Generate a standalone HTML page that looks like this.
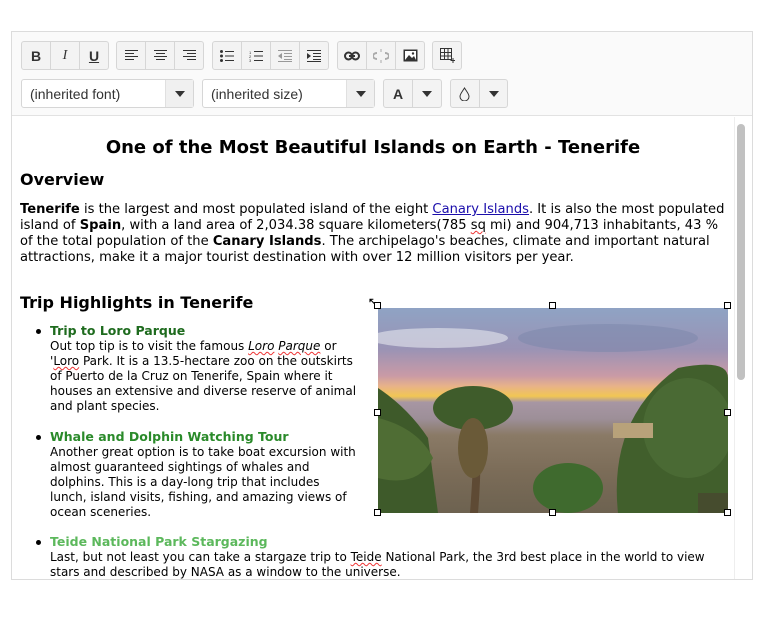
<!DOCTYPE html>
<html><head><meta charset="utf-8"><style>
*{box-sizing:border-box;margin:0;padding:0}
body{width:764px;height:643px;background:#fff;position:relative;font-family:"DejaVu Sans",Verdana,sans-serif;color:#000;overflow:hidden}
.ab{position:absolute;white-space:nowrap}
#ed{position:absolute;left:11px;top:31px;width:742px;height:549px;border:1px solid #dcdcdc}
#tb{position:absolute;left:12px;top:32px;width:740px;height:84px;background:#fafafa;border-bottom:1px solid #e2e2e2}
.g{position:absolute;top:41px;height:29px;border:1px solid #d6d6d6;border-radius:3px;background:#f3f3f3;display:flex}
.g>div{flex:1;border-right:1px solid #d6d6d6;display:flex;align-items:center;justify-content:center;font-family:"Liberation Sans",sans-serif;font-size:14px;color:#333;position:relative}
.g>div:last-child{border-right:none}
.sel{position:absolute;top:79px;height:29px;border:1px solid #d6d6d6;border-radius:3px;background:#fff;font-family:"Liberation Sans",sans-serif;font-size:14px;color:#333;padding:6px 8px}
.sel .dd{position:absolute;right:0;top:0;width:28px;height:27px;background:#f0f0f0;border-left:1px solid #e0e0e0}
.tri{display:block;width:0;height:0;border-left:5px solid transparent;border-right:5px solid transparent;border-top:6px solid #333;position:absolute}
.l{font-size:12px;position:absolute;white-space:nowrap;left:50px}
.h{font-weight:bold;font-size:12.5px}
.sq{position:absolute;width:7px;height:7px;border:1px solid #000;background:#fff}
.sp{text-decoration:underline wavy #e33;text-decoration-thickness:1px}
.bu{position:absolute;left:36px;width:5px;height:5px;border-radius:50%;background:#000}
</style></head><body>
<div id="ed"></div>
<div id="tb"></div>
<!-- row1 -->
<div class="g" style="left:21px;width:88px"><div style="font-weight:bold">B</div><div style="font-style:italic;font-family:'Liberation Serif',serif">I</div><div style="text-decoration:underline;font-weight:bold">U</div></div>
<div class="g" style="left:116px;width:88px"><div><svg width="13" height="11"><path d="M0 .5h13M0 3.5h9M0 6.5h13M0 9.5h9" stroke="#333"/></svg></div><div><svg width="13" height="11"><path d="M0 .5h13M2 3.5h9M0 6.5h13M2 9.5h9" stroke="#333"/></svg></div><div><svg width="13" height="11"><path d="M0 .5h13M4 3.5h9M0 6.5h13M4 9.5h9" stroke="#333"/></svg></div></div>
<div class="g" style="left:212px;width:117px"><div><svg width="14" height="12"><circle cx="1.5" cy="1.5" r="1.5" fill="#333"/><circle cx="1.5" cy="6" r="1.5" fill="#333"/><circle cx="1.5" cy="10.5" r="1.5" fill="#333"/><path d="M5 1.5h9M5 6h9M5 10.5h9" stroke="#333"/></svg></div><div><svg width="14" height="12"><text x="0" y="4" font-size="4" fill="#333">1</text><text x="0" y="8" font-size="4" fill="#333">2</text><text x="0" y="12" font-size="4" fill="#333">3</text><path d="M5 1.5h9M5 6h9M5 10.5h9" stroke="#333"/></svg></div><div><svg width="14" height="12"><path d="M0 .5h14M6 3.5h8M6 6.5h8M6 9.5h8M0 11.5h14" stroke="#999"/><path d="M4 3v6L0 6z" fill="#999"/></svg></div><div><svg width="14" height="12"><path d="M0 .5h14M6 3.5h8M6 6.5h8M6 9.5h8M0 11.5h14" stroke="#333"/><path d="M0 3v6l4-3z" fill="#333"/></svg></div></div>
<div class="g" style="left:337px;width:88px"><div><svg width="16" height="10"><rect x="1" y="1.5" width="7" height="7" rx="3.5" fill="none" stroke="#333" stroke-width="2"/><rect x="8" y="1.5" width="7" height="7" rx="3.5" fill="none" stroke="#333" stroke-width="2"/><path d="M5 5h6" stroke="#333" stroke-width="2"/></svg></div><div><svg width="16" height="14"><path d="M4 4a4 3 0 0 0 0 6M12 4a4 3 0 0 1 0 6" fill="none" stroke="#aaa" stroke-width="2"/><path d="M8 0v3M8 11v3" stroke="#aaa"/></svg></div><div><svg width="15" height="13"><rect x=".5" y=".5" width="14" height="12" fill="#333"/><rect x="2" y="2" width="11" height="9" fill="#fff"/><path d="M2 11l4-5 3 3 2-2 2 4z" fill="#333"/><circle cx="10" cy="4.5" r="1.2" fill="#333"/></svg></div></div>
<div class="g" style="left:432px;width:30px"><div><svg width="15" height="15"><path d="M.5.5h11v11h-11zM4.5.5v11M8 .5v11M.5 4.5h11M.5 8h11" fill="none" stroke="#333"/><path d="M13 10v5M10.5 12.5h5" stroke="#333"/></svg></div></div>
<!-- row2 -->
<div class="sel" style="left:21px;width:173px">(inherited font)<div class="dd"><span class="tri" style="left:9px;top:11px"></span></div></div>
<div class="sel" style="left:202px;width:173px">(inherited size)<div class="dd"><span class="tri" style="left:9px;top:11px"></span></div></div>
<div class="g" style="left:383px;width:59px;top:79px"><div style="font-weight:bold">A</div><div><span class="tri" style="left:9px;top:11px"></span></div></div>
<div class="g" style="left:450px;width:58px;top:79px"><div><svg width="11" height="14"><path d="M5.5 1C3 5 1 7 1 9.5a4.5 4.5 0 0 0 9 0C10 7 8 5 5.5 1z" fill="none" stroke="#333"/></svg></div><div><span class="tri" style="left:9px;top:11px"></span></div></div>
<!-- scrollbar -->
<div class="ab" style="left:734px;top:117px;width:1px;height:462px;background:#eee"></div>
<div class="ab" style="left:737px;top:124px;width:8px;height:256px;background:#c1c1c1;border-radius:4px"></div>
<!-- content -->
<div class="ab" style="left:12px;width:722px;top:137px;text-align:center;font-weight:bold;font-size:18px">One of the Most Beautiful Islands on Earth - Tenerife</div>
<div class="ab" style="left:20px;top:170px;font-weight:bold;font-size:16px">Overview</div>
<div class="ab" style="left:20px;top:202px;font-size:13.1px;line-height:16px">
<b>Tenerife</b> is the largest and most populated island of the eight <span style="text-decoration:underline;color:#1a0dab">Canary Islands</span>. It is also the most populated<br>
island of <b>Spain</b>, with a land area of 2,034.38 square kilometers(785 <span class="sp">sq</span> mi) and 904,713 inhabitants, 43 %<br>
of the total population of the <b>Canary Islands</b>. The archipelago's beaches, climate and important natural<br>
attractions, make it a major tourist destination with over 12 million visitors per year.</div>
<div class="ab" style="left:20px;top:293px;font-weight:bold;font-size:16px">Trip Highlights in Tenerife</div>
<div class="bu" style="top:329px"></div>
<div class="l" style="top:323px;line-height:15px"><span class="h" style="color:#1e6b1e">Trip to Loro Parque</span><br>
Out top tip is to visit the famous <i><span class="sp">Loro</span> <span class="sp">Parque</span></i> or<br>
'<span class="sp">Loro</span> Park. It is a 13.5-hectare zoo on the outskirts<br>
of Puerto de la Cruz on Tenerife, Spain where it<br>
houses an extensive and diverse reserve of animal<br>
and plant species.</div>
<div class="bu" style="top:435px"></div>
<div class="l" style="top:429px;line-height:15px"><span class="h" style="color:#2a8a2a">Whale and Dolphin Watching Tour</span><br>
Another great option is to take boat excursion with<br>
almost guaranteed sightings of whales and<br>
dolphins. This is a day-long trip that includes<br>
lunch, island visits, fishing, and amazing views of<br>
ocean sceneries.</div>
<div class="bu" style="top:540px"></div>
<div class="l" style="top:534px;line-height:15px"><span class="h" style="color:#5cb85c">Teide National Park Stargazing</span><br>
Last, but not least you can take a stargaze trip to <span class="sp">Teide</span> National Park, the 3rd best place in the world to view<br>
stars and described by NASA as a window to the universe.</div>
<!-- image -->
<div class="ab" style="left:378px;top:308px;width:350px;height:205px;overflow:hidden;background:linear-gradient(180deg,#8fa3c4 0%,#9a93b5 20%,#c99aa6 33%,#e7b28a 38%,#f1c654 43%,#a796a3 46%,#9d8f98 54%,#8a7a66 62%,#7b6c58 80%,#6d6250 100%)">
<svg width="350" height="205" style="position:absolute;left:0;top:0">
<ellipse cx="60" cy="30" rx="70" ry="10" fill="#e6e8ee" opacity=".6"/>
<ellipse cx="230" cy="30" rx="90" ry="14" fill="#7a86aa" opacity=".5"/>
<path d="M0 80 Q30 100 50 130 L60 205 L0 205z" fill="#3e5a2a"/>
<path d="M0 110 Q40 120 55 150 Q40 180 0 170z" fill="#4f6d34"/>
<path d="M92 205 q6 -80 2 -110 l6 0 q5 50 0 110 z" fill="#5e4a34"/>
<ellipse cx="95" cy="100" rx="40" ry="22" fill="#3f5c2b"/>
<ellipse cx="95" cy="140" rx="15" ry="30" fill="#6a5a38"/>
<path d="M240 205 Q230 110 300 60 Q350 50 350 70 L350 205z" fill="#415f2c"/>
<ellipse cx="310" cy="120" rx="45" ry="50" fill="#4a6a34"/>
<ellipse cx="190" cy="180" rx="35" ry="25" fill="#3f6a2e"/>
<rect x="235" y="115" width="40" height="15" fill="#b8a27a"/>
<rect x="320" y="185" width="30" height="20" fill="#4a4030" opacity=".6"/>
</svg></div>
<div class="ab" style="left:369px;top:296px;font-size:12px;font-weight:bold">⤡</div>
<div class="sq" style="left:374px;top:302px"></div>
<div class="sq" style="left:549px;top:302px"></div>
<div class="sq" style="left:724px;top:302px"></div>
<div class="sq" style="left:374px;top:409px"></div>
<div class="sq" style="left:724px;top:409px"></div>
<div class="sq" style="left:374px;top:509px"></div>
<div class="sq" style="left:549px;top:509px"></div>
<div class="sq" style="left:724px;top:509px"></div>
</body></html>
